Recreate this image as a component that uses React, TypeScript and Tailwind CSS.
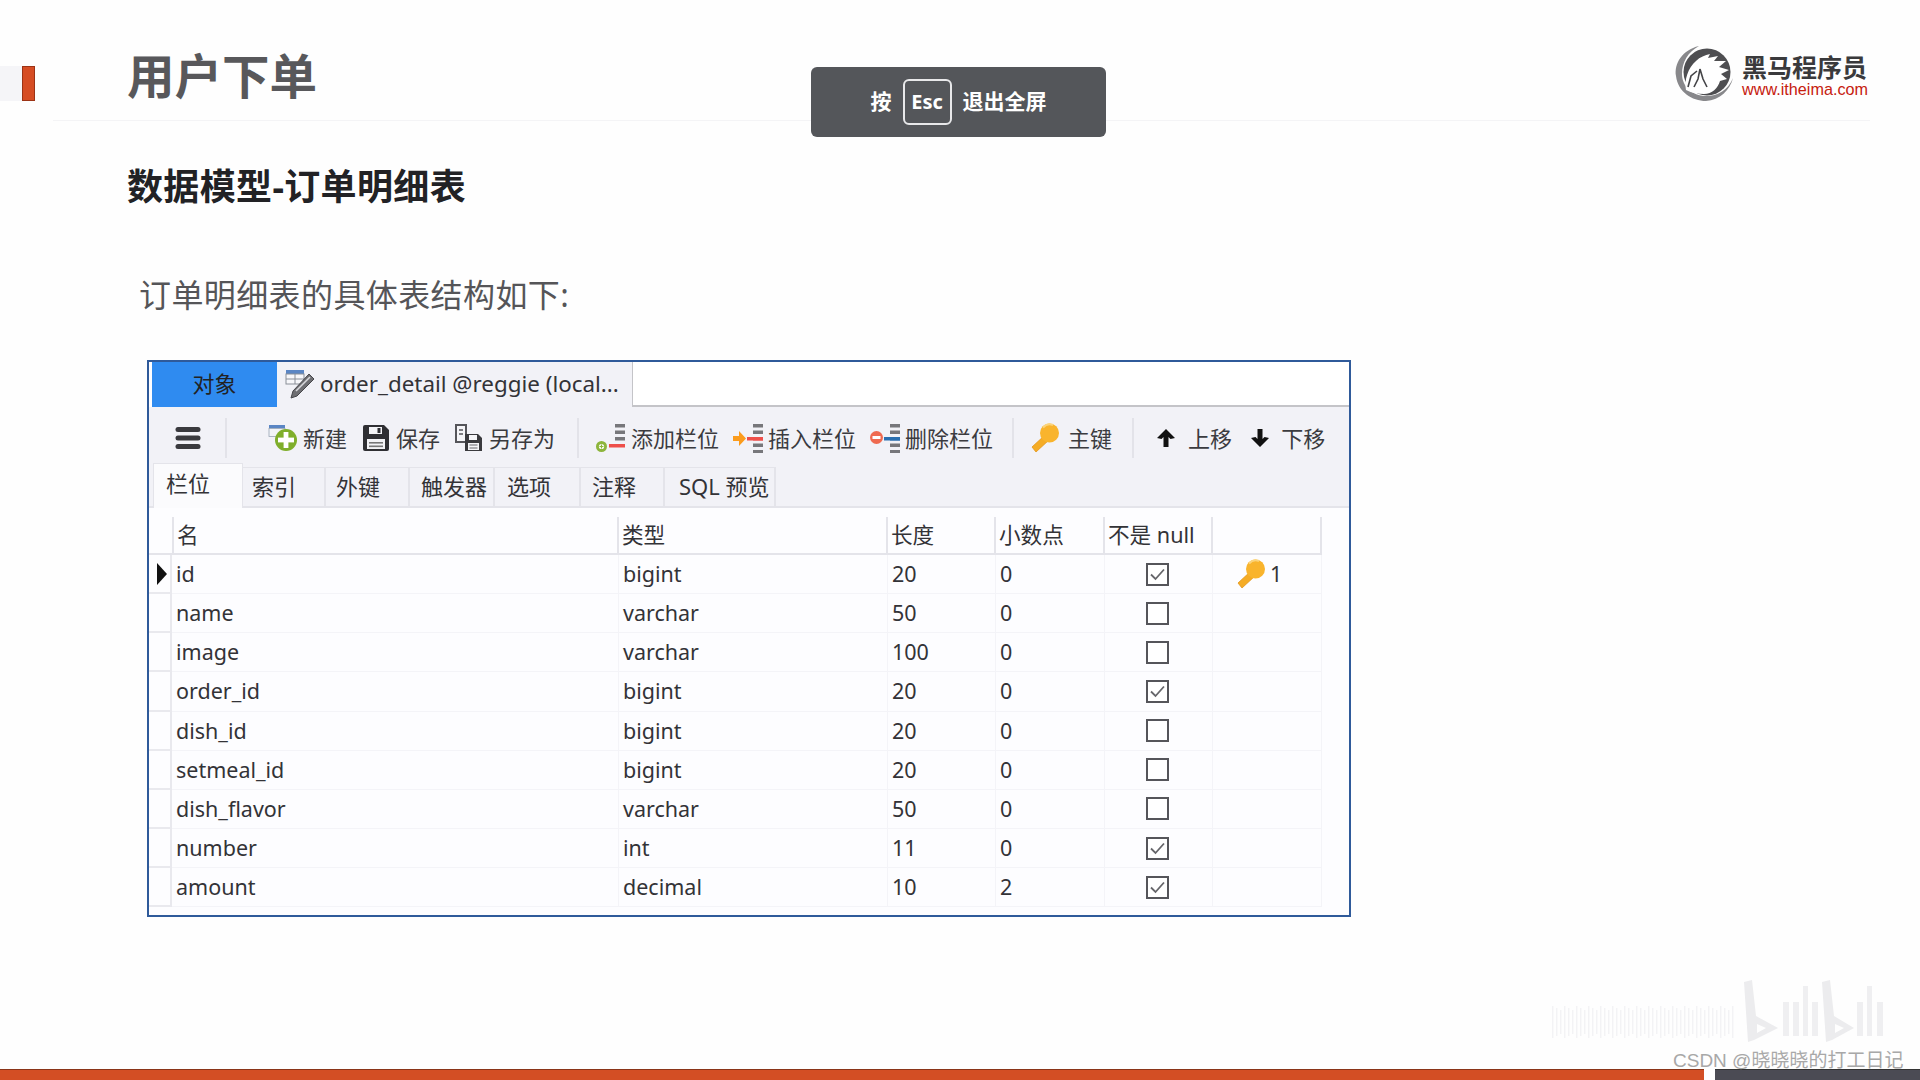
import React from "react";

const cjk = "font-['Noto_Sans','Noto_Sans_CJK_SC',sans-serif]";

const Hamburger = () => (
  <svg width="26" height="24" viewBox="0 0 26 24">
    <rect x="0.5" y="1" width="25" height="5" rx="2.5" fill="#3a3a3e" />
    <rect x="0.5" y="9.5" width="25" height="5" rx="2.5" fill="#3a3a3e" />
    <rect x="0.5" y="18" width="25" height="5" rx="2.5" fill="#3a3a3e" />
  </svg>
);

const KeyIcon = ({ size = 30 }: { size?: number }) => (
  <svg width={size} height={size} viewBox="0 0 30 30">
    <path d="M15 12 L2 24 L6 29 L19 17 Z" fill="#f5ac25" stroke="#e2961a" strokeWidth="0.8" />
    <circle cx="19.5" cy="10" r="9.5" fill="#f9b42d" />
    <path d="M13 4.5 A9 9 0 0 1 23 2" stroke="#fbd47c" strokeWidth="2" fill="none" />
  </svg>
);

const NewIcon = () => (
  <svg width="30" height="28" viewBox="0 0 30 28">
    <rect x="1" y="1" width="16" height="3.5" fill="#5b86c4" />
    <rect x="1" y="4.5" width="16" height="8" fill="#f2f4f8" stroke="#9aa5b5" strokeWidth="0.8" />
    <circle cx="18" cy="16" r="11" fill="#7fae2b" />
    <rect x="10" y="13.6" width="16" height="4.8" fill="#fff" />
    <rect x="15.6" y="8" width="4.8" height="16" fill="#fff" />
  </svg>
);

const SaveIcon = () => (
  <svg width="28" height="28" viewBox="0 0 28 28">
    <path d="M1 3 a2 2 0 0 1 2-2 H22 L27 6 V25 a2 2 0 0 1-2 2 H3 a2 2 0 0 1-2-2 Z" fill="#2f2f33" />
    <rect x="7" y="3" width="13" height="7" fill="#f3f3f6" />
    <rect x="15.5" y="4" width="3" height="5" fill="#2f2f33" />
    <rect x="5" y="15" width="18" height="10" fill="#f3f3f6" />
    <rect x="7" y="18" width="14" height="1.6" fill="#777" />
    <rect x="7" y="21.5" width="14" height="1.6" fill="#777" />
  </svg>
);

const SaveAsIcon = () => (
  <svg width="30" height="30" viewBox="0 0 30 30">
    <path d="M2 2 H12 V19 H2 Z" fill="#f5f5f8" stroke="#55555a" strokeWidth="2" />
    <path d="M5 7 H9 M5 11 H9" stroke="#55555a" strokeWidth="1.5" />
    <path d="M11 11 H24 L28 15 V28 H11 Z" fill="#3a3a3e" />
    <rect x="15" y="12" width="8" height="5" fill="#f5f5f8" />
    <rect x="14" y="20" width="11" height="7" fill="#f5f5f8" />
    <path d="M15.5 22 H23.5 M15.5 25 H23.5" stroke="#66666a" strokeWidth="1.2" />
  </svg>
);

const Bars = ({ rows }: { rows: string[] }) => (
  <g>
    {rows.map((c, i) => (
      <rect key={i} x="20" y={1 + i * 6.5} width="10" height="3.5" fill={c} />
    ))}
  </g>
);

const AddColIcon = () => (
  <svg width="30" height="30" viewBox="0 0 30 30">
    <Bars rows={["#77777b", "#77777b", "#77777b"]} />
    <rect x="14" y="21" width="16" height="3.5" fill="#ee4f4a" />
    <circle cx="6.5" cy="23.5" r="5.5" fill="#8db53c" />
    <circle cx="6.5" cy="23.5" r="2.6" fill="#fff" />
    <path d="M4.5 23.5 H8.5 M6.5 21.5 V25.5" stroke="#8db53c" strokeWidth="1.2" />
  </svg>
);

const InsertIcon = () => (
  <svg width="30" height="30" viewBox="0 0 30 30">
    <Bars rows={["#77777b", "#77777b", "#ee4f4a", "#77777b", "#77777b"]} />
    <rect x="14" y="14" width="16" height="3.5" fill="#ee4f4a" />
    <path d="M0 13 H6 V8 L13 15.5 L6 23 V18 H0 Z" fill="#fb9c1d" />
  </svg>
);

const DeleteIcon = () => (
  <svg width="30" height="30" viewBox="0 0 30 30">
    <Bars rows={["#77777b", "#77777b", "#2a6fb0", "#77777b", "#77777b"]} />
    <rect x="14" y="14" width="16" height="3.5" fill="#2a6fb0" />
    <circle cx="6.5" cy="14.5" r="6.5" fill="#ef6a50" />
    <rect x="2.5" y="13" width="8" height="3" fill="#fff" />
  </svg>
);

const ArrowIcon = ({ down }: { down?: boolean }) => (
  <svg width="20" height="20" viewBox="0 0 20 20" className={down ? "rotate-180" : ""}>
    <path d="M10 1 L19 10 L14.5 11 L12.5 9 V19 H7.5 V9 L5.5 11 L1 10 Z" fill="#111" />
  </svg>
);

const TableEditIcon = () => (
  <svg width="30" height="30" viewBox="0 0 30 30">
    <rect x="1" y="1" width="18" height="4" fill="#5b86c4" />
    <rect x="1" y="5" width="18" height="10" fill="#f7f7fa" stroke="#8a8f98" strokeWidth="1" />
    <path d="M1 10 H19 M10 5 V15" stroke="#8a8f98" strokeWidth="1" />
    <path d="M24 5 L29 10 L12 27 L6 29 L8 22 Z" fill="#6f6f73" stroke="#46464a" strokeWidth="1" />
    <path d="M11 22 L25 8" stroke="#d8d8dc" strokeWidth="1.6" />
  </svg>
);

const Sep = ({ className }: { className: string }) => (
  <div className={`h-10 w-[2px] bg-[#e3e3e9] ${className}`} />
);

const Tool = ({ icon, label, className }: { icon: React.ReactNode; label: string; className: string }) => (
  <div className={`flex items-center gap-[5px] ${className}`}>
    {icon}
    <span className="text-[22px] leading-none text-[#3b3b3f]">{label}</span>
  </div>
);

const subTabs = [
  { label: "索引", w: "w-[83px]", pl: "pl-[9px]" },
  { label: "外键", w: "w-[84px]", pl: "pl-[10px]" },
  { label: "触发器", w: "w-[85px]", pl: "pl-[11px]" },
  { label: "选项", w: "w-[86px]", pl: "pl-[12px]" },
  { label: "注释", w: "w-[84px]", pl: "pl-[11px]" },
  { label: "SQL 预览", w: "w-[111px]", pl: "pl-[14px]" },
];

const rows = [
  { name: "id", type: "bigint", len: "20", dec: "0", nn: true, key: true, cur: true },
  { name: "name", type: "varchar", len: "50", dec: "0", nn: false },
  { name: "image", type: "varchar", len: "100", dec: "0", nn: false },
  { name: "order_id", type: "bigint", len: "20", dec: "0", nn: true },
  { name: "dish_id", type: "bigint", len: "20", dec: "0", nn: false },
  { name: "setmeal_id", type: "bigint", len: "20", dec: "0", nn: false },
  { name: "dish_flavor", type: "varchar", len: "50", dec: "0", nn: false },
  { name: "number", type: "int", len: "11", dec: "0", nn: true },
  { name: "amount", type: "decimal", len: "10", dec: "2", nn: true },
];

const gridCols = "grid-cols-[23px_447px_269px_108px_109px_108px_109px]";

const Check = ({ on }: { on: boolean }) => (
  <div className="flex h-[23px] w-[23px] items-center justify-center border-2 border-[#55555a] bg-white">
    {on && (
      <svg width="17" height="17" viewBox="0 0 17 17">
        <path d="M2 8.5 L6.5 13 L15 3.5" stroke="#66666a" strokeWidth="1.8" fill="none" />
      </svg>
    )}
  </div>
);

const Cell = ({ children, className = "" }: { children?: React.ReactNode; className?: string }) => (
  <div className={`flex items-center border-r border-b border-[#f4f4f8] pl-[4px] ${className}`}>{children}</div>
);

const Logo = () => (
  <svg width="60" height="56" viewBox="0 0 60 56">
    <path d="M25 0 C8 4 0 18 2 30 C4 46 18 55 32 55 C46 54 56 44 59 32 C54 44 44 50 32 50 C18 50 8 40 8 28 C8 16 14 6 25 0 Z" fill="#88888b" />
    <circle cx="33" cy="26" r="23.5" fill="#4e4e51" />
    <path d="M12 44 C10 34 14 22 22 15 C26 11 31 9 36 8 L34 12 L44 10 L40 15 L52 15 L45 21 L55 24 L47 28 L53 33 L46 35 C44 42 38 48 30 48 C24 48 18 47 12 44 Z" fill="#fff" />
    <path d="M14 41 L17 30 L23 25 M26 23 L24 33 L20 41 M26 23 L29 33 L33 41" stroke="#444447" strokeWidth="1.6" fill="none" />
  </svg>
);

const hatch = Array.from({ length: 46 }, (_, i) => i);

export default function App() {
  return (
    <div className={`relative flex h-[1080px] w-[1920px] flex-col overflow-hidden bg-[#fefefe] ${cjk}`}>
      {/* header */}
      <header className="flex h-[121px] shrink-0">
        <div className="flex w-[53px] shrink-0 pt-[66px]">
          <div className="h-[35px] w-[22px] bg-[#f5f5f8]" />
          <div className="h-[35px] w-[13px] border border-[#9c3315] bg-[#d64d24]" />
        </div>
        <div className="mr-[50px] flex flex-1 justify-between border-b border-[#f4f4f6]">
          <h1 className="pl-[74px] pt-[42px] text-[47.5px] font-bold leading-[68px] text-[#58585b]">用户下单</h1>
          <div className="flex gap-[8px] pr-[2px] pt-[46px]">
            <Logo />
            <div className="flex flex-col items-start pt-[8px]">
              <span className="text-[25px] font-bold leading-[27px] text-[#3a3a3c]">黑马程序员</span>
              <span className="text-[16.2px] leading-[17px] text-[#c6200f] font-['Liberation_Sans',sans-serif]">www.itheima.com</span>
            </div>
          </div>
        </div>
      </header>

      {/* body */}
      <main className="flex flex-1 flex-col pl-[127px]">
        <h2 className="pt-[40px] text-[36px] font-bold leading-[52px] tracking-[0.35px] text-[#222225]">数据模型-订单明细表</h2>
        <p className="pl-[12px] pt-[59px] text-[32px] leading-[46px] tracking-[0.4px] text-[#555558]">订单明细表的具体表结构如下:</p>

        {/* navicat window */}
        <section className="ml-[20px] mt-[42px] flex h-[557px] w-[1204px] flex-col border-2 border-[#2f5a9a] bg-[#fdfdff] text-[22px] text-[#333337]">
          <div className="flex h-[45px] shrink-0 pl-[3px]">
            <div className="flex w-[125px] items-center justify-center bg-[#2f8bf0] pb-[2px] text-[22px] text-[#222]">对象</div>
            <div className="flex w-[356px] items-center gap-[5px] border-r border-[#c4c4c8] bg-[#f2f2f7] pb-[2px] pl-[8px] text-[22.4px]">
              <TableEditIcon />
              <span>order_detail @reggie (local...</span>
            </div>
            <div className="flex-1 border-b-2 border-[#c4c4c8] bg-white" />
          </div>

          <div className="flex h-[60px] shrink-0 items-center bg-[#f2f2f7] pt-[2px]">
            <div className="ml-[26px]"><Hamburger /></div>
            <Sep className="ml-[24px]" />
            <Tool icon={<NewIcon />} label="新建" className="ml-[41px]" />
            <Tool icon={<SaveIcon />} label="保存" className="ml-[15px] !gap-[6px]" />
            <Tool icon={<SaveAsIcon />} label="另存为" className="ml-[14px]" />
            <Sep className="ml-[22px]" />
            <Tool icon={<AddColIcon />} label="添加栏位" className="ml-[16px] !gap-[6px]" />
            <Tool icon={<InsertIcon />} label="插入栏位" className="ml-[14px]" />
            <Tool icon={<DeleteIcon />} label="删除栏位" className="ml-[14px]" />
            <Sep className="ml-[19px]" />
            <Tool icon={<KeyIcon />} label="主键" className="ml-[16px] !gap-[8px]" />
            <Sep className="ml-[20px]" />
            <Tool icon={<ArrowIcon />} label="上移" className="ml-[22px] !gap-[12px]" />
            <Tool icon={<ArrowIcon down />} label="下移" className="ml-[18px] !gap-[11px]" />
          </div>

          <div className="flex h-[41px] shrink-0 items-end border-b-2 border-[#e4e4ea] bg-[#f2f2f7] pl-[4px]">
            <div className="mb-[-2px] flex h-[45px] w-[90px] items-center border-x border-t border-[#e4e4ea] bg-[#fbfbfd] pb-[5px] pl-[12px]">栏位</div>
            {subTabs.map((t) => (
              <div key={t.label} className={`flex h-[39px] items-center border-r-2 border-t border-[#e4e4ea] pb-[2px] ${t.w} ${t.pl}`}>
                {t.label}
              </div>
            ))}
          </div>

          <div className={`mt-[9px] grid ${gridCols} w-[1173px] h-[38px] shrink-0 text-[21.6px]`}>
            <div className="border-b-2 border-[#e4e4ea]" />
            {["名", "类型", "长度", "小数点", "不是 null", ""].map((h, i) => (
              <div key={i} className={`flex items-center border-b-2 border-r-2 border-[#e4e4ea] pl-[3px] ${i === 0 ? "border-l-2" : ""}`}>
                {h}
              </div>
            ))}
          </div>

          {rows.map((r) => (
            <div key={r.name} className={`grid ${gridCols} w-[1173px] h-[39.15px] shrink-0 text-[21.5px]`}>
              <div className="flex items-center justify-end border-b-2 border-r-2 border-[#e9e9ee]">
                {r.cur && <div className="mr-[3px] h-0 w-0 border-y-[11px] border-l-[10px] border-y-transparent border-l-[#111]" />}
              </div>
              <Cell>{r.name}</Cell>
              <Cell>{r.type}</Cell>
              <Cell>{r.len}</Cell>
              <Cell>{r.dec}</Cell>
              <Cell className="justify-center !pl-[0px] pr-[2px]"><Check on={r.nn} /></Cell>
              <Cell className="!pl-[23px]">
                {r.key && (
                  <>
                    <KeyIcon />
                    <span className="ml-[4px]">1</span>
                  </>
                )}
              </Cell>
            </div>
          ))}
        </section>
      </main>

      {/* footer */}
      <footer className="flex h-[11px] shrink-0">
        <div className="w-[1704px] border-t border-[#8a3418] bg-[#d34e24]" />
        <div className="w-[11px]" />
        <div className="flex-1 border-t border-[#333] bg-[#4b4b54]" />
      </footer>

      {/* fullscreen hint overlay */}
      <div className="absolute left-[811px] top-[67px] flex h-[70px] w-[295px] items-center justify-center rounded-[6px] bg-[#54565a] pb-[2px] font-bold text-white">
        <span className="text-[21px] leading-none">按</span>
        <span className="mx-[11px] mt-[2px] flex h-[46px] w-[49px] items-center justify-center rounded-[6px] border-2 border-[#e8e8ea] text-[20px] leading-none">Esc</span>
        <span className="text-[21px] leading-none">退出全屏</span>
      </div>

      {/* watermark overlay */}
      <svg className="absolute left-[1540px] top-[978px]" width="350" height="68" viewBox="0 0 350 68">
        {hatch.map((i) => (
          <rect key={i} x={12 + i * 4} y={28 + (i % 3) * 2} width="1.5" height={32 - (i % 3) * 4} fill="#f3f3f5" />
        ))}
        <path d="M204 4 L212 2 L216 38 L238 50 L214 62 L208 64 Z M217 46 V55 L226 50 Z" fillRule="evenodd" fill="#ececee" />
        <path d="M243 24 H249 V58 H243 Z M253 24 H259 V58 H253 Z M263 8 H268 V58 H263 Z M272 24 H278 V58 H272 Z" fill="#efeff1" />
        <path d="M282 4 L290 2 L294 38 L314 50 L292 62 L286 64 Z M295 46 V55 L304 50 Z" fillRule="evenodd" fill="#ececee" />
        <path d="M317 24 H323 V58 H317 Z M327 8 H332 V58 H327 Z M337 24 H343 V58 H337 Z" fill="#efeff1" />
      </svg>
      <div className="absolute left-[1673px] top-[1049px] text-[19px] leading-[24px] text-[#a8a8a8] font-['Liberation_Sans','Noto_Sans_CJK_SC',sans-serif]">
        CSDN @晓晓晓的打工日记
      </div>
    </div>
  );
}
